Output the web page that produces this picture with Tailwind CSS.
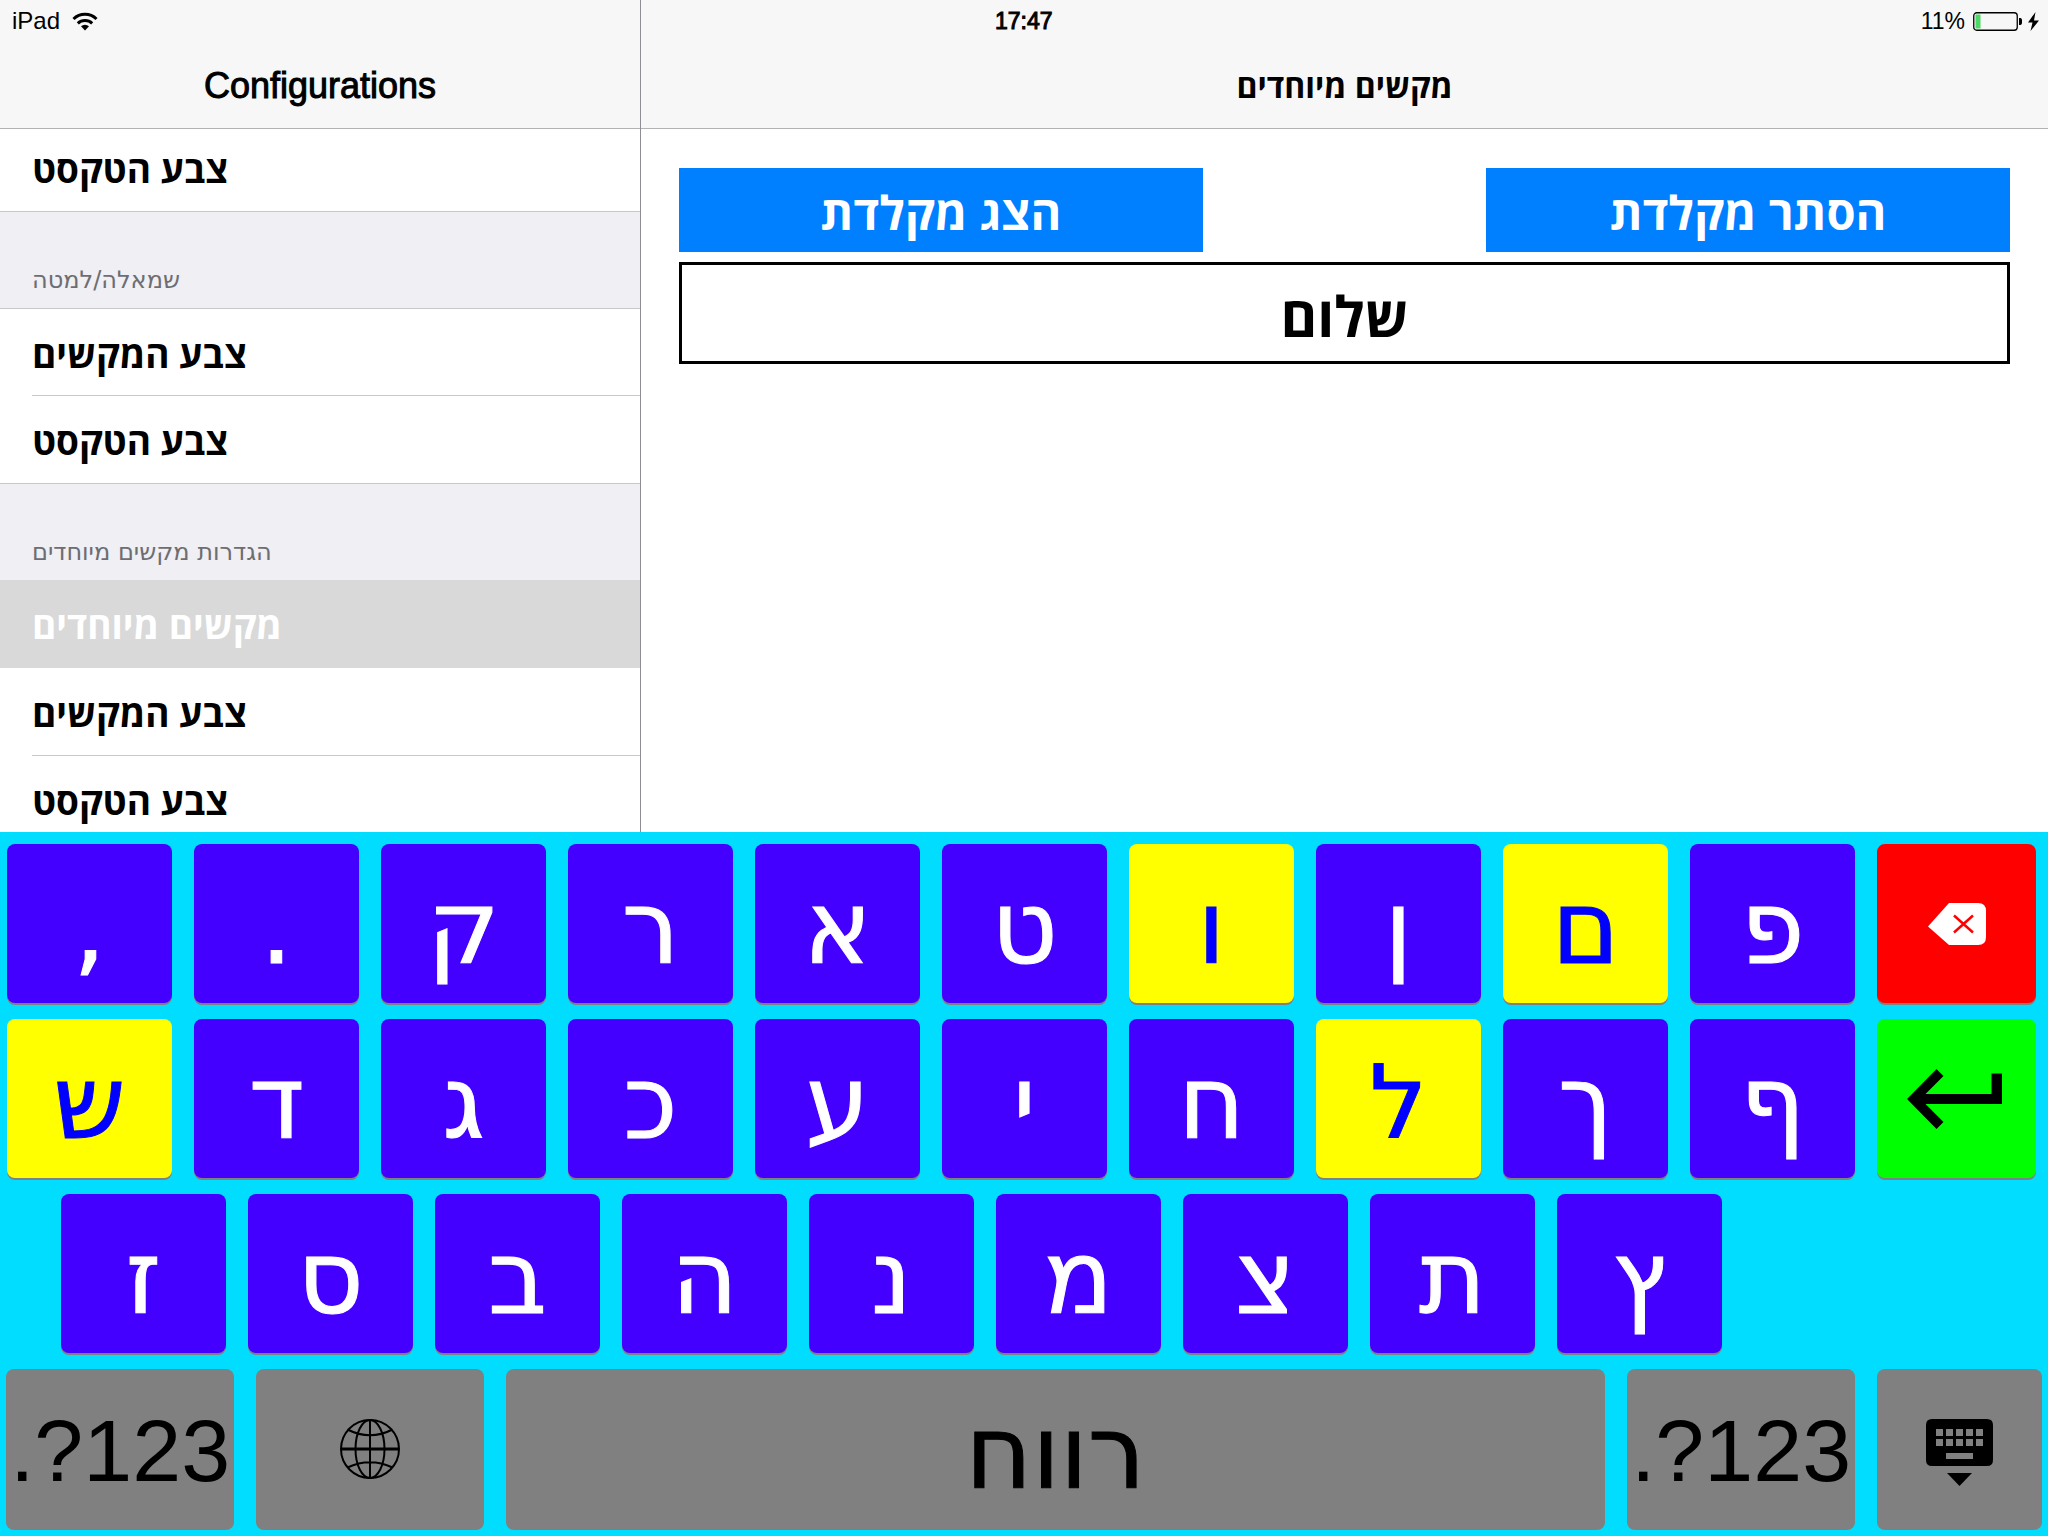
<!DOCTYPE html>
<html lang="he">
<head>
<meta charset="utf-8">
<meta name="viewport" content="width=device-width, initial-scale=1">
<title>מקשים מיוחדים</title>
<script src="https://cdn.jsdelivr.net/npm/@tailwindcss/browser@4"></script>
</head>
<body class="flex h-screen flex-col overflow-hidden bg-white font-['Open_Sans','Liberation_Sans',sans-serif] text-black">

<div class="flex min-h-0 flex-1">
  <!-- Sidebar -->
  <aside class="flex w-[641px] shrink-0 flex-col border-r border-[#8e8e93]">
    <header class="flex h-[129px] shrink-0 flex-col border-b border-[#b2b2b2] bg-[#f7f7f7] font-['Liberation_Sans',sans-serif]">
      <div class="flex h-[42px] items-center gap-3 px-3 text-2xl">
        <span>iPad</span>
        <svg class="h-[19px] w-[26px]" viewBox="0 0 26 19" fill="none" stroke="#000" stroke-width="3" aria-label="Wi-Fi"><path d="M1.5 7a16.5 16.5 0 0 1 23 0M5.800 11.300a10.500 10.500 0 0 1 14.400 0"/><path d="M13 18.500l-4-4.200a6 6 0 0 1 8 0z" fill="#000" stroke="none"/></svg>
      </div>
      <h1 class="flex flex-1 items-start justify-center pt-6 text-[36px] leading-10 [-webkit-text-stroke:1px_#000]">Configurations</h1>
    </header>
    <nav class="min-h-0 flex-1 overflow-hidden">
      <ul class="-mt-[5px] [&_button]:h-[88px] [&_button]:w-full [&_button]:pt-0.5 [&_button]:pl-8 [&_button]:text-left [&_button]:text-[37px] [&_button]:font-bold">
        <li class="h-[88px] border-b border-[#c8c7cc]"><button>צבע הטקסט</button></li>
        <li class="flex h-[97px] items-end border-b border-[#c8c7cc] bg-[#efeff4] pb-3 pl-8 font-['DejaVu_Sans',sans-serif] text-2xl text-[#6d6d72]">שמאלה/למטה</li>
        <li class="h-[87px]"><button>צבע המקשים</button></li>
        <li class="-mt-px ml-8 h-0 border-t border-[#c8c7cc]"></li>
        <li class="h-[88px] border-b border-[#c8c7cc]"><button>צבע הטקסט</button></li>
        <li class="flex h-24 items-end bg-[#efeff4] pb-3 pl-8 font-['DejaVu_Sans',sans-serif] text-2xl text-[#6d6d72]">הגדרות מקשים מיוחדים</li>
        <li class="h-[88px] bg-[#d9d9d9] text-white"><button>מקשים מיוחדים</button></li>
        <li class="h-[88px]"><button>צבע המקשים</button></li>
        <li class="-mt-px ml-8 h-0 border-t border-[#c8c7cc]"></li>
        <li class="h-[88px]"><button>צבע הטקסט</button></li>
      </ul>
    </nav>
  </aside>

  <!-- Detail pane -->
  <main class="flex min-w-0 flex-1 flex-col">
    <header class="flex h-[129px] shrink-0 flex-col border-b border-[#b2b2b2] bg-[#f7f7f7]">
      <div class="flex h-[42px] items-center justify-between pr-2 font-['Liberation_Sans',sans-serif] text-[23px]">
        <span class="pl-[354px] [-webkit-text-stroke:1px_#000]">17:47</span>
        <div class="flex items-center">
          <span>11%</span>
          <svg class="ml-2 h-[19px] w-[67px]" viewBox="0 0 67 19" aria-label="Battery charging"><rect x=".75" y=".75" width="43.500" height="17.500" rx="3" fill="none" stroke="#000" stroke-width="1.300"/><path d="M2.500 2.500h5v14h-5z" fill="#4cd964"/><path d="M46 6h1.500a2 2 0 0 1 1.500 2v3a2 2 0 0 1-1.500 2H46z"/><path d="M62.500 0L55 10.500h4.500L57.500 19 66 8.500h-5z"/></svg>
        </div>
      </div>
      <h2 class="flex flex-1 items-start justify-center pt-6 text-[32px] leading-10 font-bold">מקשים מיוחדים</h2>
    </header>
    <div class="flex flex-col gap-[10px] px-[38px] pt-[39px]">
      <div class="grid grid-cols-[37fr_20fr_37fr] [&>button]:h-[84px] [&>button]:bg-[#0080ff] [&>button]:pt-1 [&>button]:text-[47px] [&>button]:font-bold [&>button]:text-white">
        <button>הצג מקלדת</button>
        <span></span>
        <button>הסתר מקלדת</button>
      </div>
      <input aria-label="טקסט" dir="rtl" value="שלום" class="h-[102px] w-full border-3 border-black bg-white pt-1 text-center text-[56px] font-bold outline-none">
    </div>
  </main>
</div>

<!-- On-screen keyboard -->
<section aria-label="Keyboard" class="flex shrink-0 flex-col gap-4 bg-[#00ddff] pt-3 pb-2 font-['DejaVu_Sans',sans-serif] text-[102px] leading-none [&_button]:flex [&_button]:h-[159px] [&_button]:min-w-0 [&_button]:items-center [&_button]:justify-center [&_button]:rounded-lg [&_button]:pt-2 [&_button]:shadow-[0_2px_0_#808080]">
  <div class="flex gap-[22px] pr-3 pl-[7px] text-white [&>button]:flex-[165_1_0%] [&>button]:bg-[#4400ff] [-webkit-text-stroke:1px]">
    <button>,</button>
    <button>.</button>
    <button>ק</button>
    <button>ר</button>
    <button>א</button>
    <button>ט</button>
    <button class="bg-[#ffff00]! text-[#0000ff]">ו</button>
    <button>ן</button>
    <button class="bg-[#ffff00]! text-[#0000ff]">ם</button>
    <button>פ</button>
    <button aria-label="Backspace" class="flex-[159_1_0%]! bg-[#ff0000]! pt-0!">
      <svg class="h-[42px] w-[58px]" viewBox="0 0 58 42"><path d="M0 23.500L21 0h29q8 0 8 8v26q0 8-8 8H21z" fill="#fff"/><path d="M26 12.500l19 17M45 12.500L26 29.500" stroke="#f00" stroke-width="2.500"/></svg>
    </button>
  </div>
  <div class="flex gap-[22px] pr-3 pl-[7px] text-white [&>button]:flex-[165_1_0%] [&>button]:bg-[#4400ff] [-webkit-text-stroke:1px]">
    <button class="bg-[#ffff00]! text-[#0000ff]">ש</button>
    <button>ד</button>
    <button>ג</button>
    <button>כ</button>
    <button>ע</button>
    <button>י</button>
    <button>ח</button>
    <button class="bg-[#ffff00]! text-[#0000ff]">ל</button>
    <button>ך</button>
    <button>ף</button>
    <button aria-label="Return" class="flex-[159_1_0%]! bg-[#00ff00]! pt-0!">
      <svg class="mr-1 h-[60px] w-[95px]" viewBox="0 0 95 60"><path d="M0 30L29.500 0l7 7L18.500 25H84.500V4.500H95V35H18.500l18 18-7 7z" fill="#000"/></svg>
    </button>
  </div>
  <div class="flex gap-[22px] pl-[61px] text-white [&>button]:flex-[165_1_0%] [&>button]:bg-[#4400ff] [-webkit-text-stroke:1px]">
    <button>ז</button>
    <button>ס</button>
    <button>ב</button>
    <button>ה</button>
    <button>נ</button>
    <button>מ</button>
    <button>צ</button>
    <button>ת</button>
    <button>ץ</button>
    <span class="flex-[304_1_0%]"></span>
  </div>
  <div class="flex gap-[22px] px-1.5 text-black [&>button]:bg-[#808080]">
    <button class="flex-[228_1_0%] pt-1! font-['Liberation_Sans',sans-serif] text-[88px]">.?123</button>
    <button aria-label="Next keyboard" class="flex-[228_1_0%] pt-0!">
      <svg class="h-[60px] w-[60px]" viewBox="0 0 60 60" fill="none" stroke="#000" stroke-width="2"><circle cx="30" cy="30" r="29"/><ellipse cx="30" cy="30" rx="14.500" ry="29"/><path d="M30 1v58M7.500 10.500Q30 22 52.500 10.500M7.500 48.500Q30 38 52.500 48.500"/><path d="M1 30h58" stroke-width="3"/></svg>
    </button>
    <button class="flex-[1099_1_0%] [-webkit-text-stroke:1px]">רווח</button>
    <button class="flex-[228_1_0%] pt-1! font-['Liberation_Sans',sans-serif] text-[88px]">.?123</button>
    <button aria-label="Hide keyboard" class="flex-[165_1_0%]">
      <svg class="h-[67px] w-[67px]" viewBox="0 0 67 67"><path fill-rule="evenodd" d="M6 0h55q6 0 6 6v35q0 6-6 6H6q-6 0-6-6V6q0-6 6-6zM10 10v7h7v-7zM20 10v7h7v-7zM30 10v7h7v-7zM40 10v7h7v-7zM50 10v7h7v-7zM10 20v7h7v-7zM20 20v7h7v-7zM30 20v7h7v-7zM40 20v7h7v-7zM50 20v7h7v-7zM20 34v6h27v-6z"/><path d="M21 54h25L33.500 67z"/></svg>
    </button>
  </div>
</section>
</body>
</html>
